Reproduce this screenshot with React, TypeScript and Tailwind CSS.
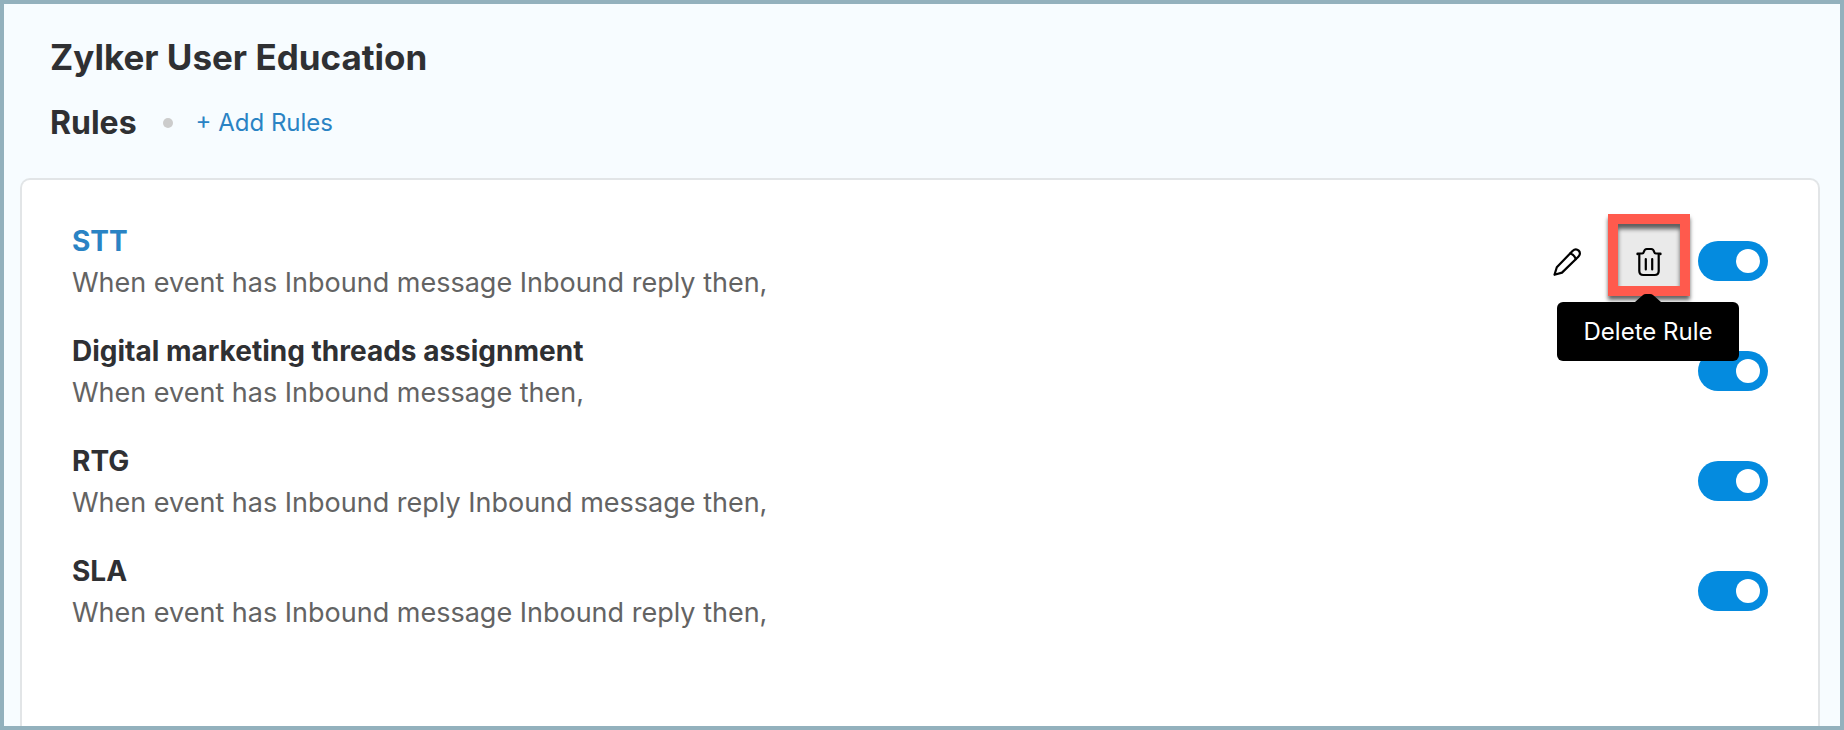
import { useState } from 'react';

interface Rule {
  id: number;
  name: string;
  summary: string;
}

const RULES: Rule[] = [
  { id: 1, name: 'STT', summary: 'When event has Inbound message Inbound reply then,' },
  { id: 2, name: 'Digital marketing threads assignment', summary: 'When event has Inbound message then,' },
  { id: 3, name: 'RTG', summary: 'When event has Inbound reply Inbound message then,' },
  { id: 4, name: 'SLA', summary: 'When event has Inbound message Inbound reply then,' },
];

function PencilIcon() {
  return (
    <svg width="30" height="30" viewBox="0 0 30 30" fill="none" stroke="#000" strokeWidth="2.2" strokeLinejoin="round" strokeLinecap="round" aria-hidden="true">
      <path d="M2.500 27.800 4.800 20.300 20.500 4C22.500 2 25 2 26.700 3.600S28.300 7.800 26.300 9.800L10 25.600Z" />
      <path d="M18.300 6.500q4 1.200 5.500 5.700" />
    </svg>
  );
}

function TrashIcon() {
  return (
    <svg width="28" height="30" viewBox="0 0 28 30" fill="none" stroke="#000" strokeWidth="2.2" strokeLinejoin="round" strokeLinecap="round" aria-hidden="true">
      <path d="M2.500 7.200V6.500h4.700c.9 0 1.300-.4 1.600-1.500C9.300 3 10 2 11.800 2h4.400c1.800 0 2.500 1 3 3 .3 1.100.7 1.500 1.600 1.500h4.700v.7" />
      <path d="M4.300 7v17c0 2.600 1.400 4 4 4h11.400c2.600 0 4-1.400 4-4V7" />
      <path d="M10.800 12v10.500M17.200 12v10.500" />
    </svg>
  );
}

function Toggle({ id, label }: { id: string; label: string }) {
  const [enabled, setEnabled] = useState(true);

  return (
    <input
      id={id}
      type="checkbox"
      role="switch"
      aria-label={label}
      checked={enabled}
      onChange={(e) => setEnabled(e.target.checked)}
      className="flex h-10 w-[70px] shrink-0 cursor-pointer appearance-none items-center rounded-full bg-gray-400 px-2 before:block before:size-6 before:rounded-full before:bg-white before:content-[''] checked:justify-end checked:bg-[#048bdf]"
    />
  );
}

function RuleActions() {
  return (
    <div className="mr-[18px] flex shrink-0 items-center gap-5 pb-[2px]">
      <button type="button" aria-label="Edit Rule" className="flex h-[72px] w-[62px] items-center justify-center pt-1">
        <PencilIcon />
      </button>
      <div className="relative">
        <button type="button" aria-label="Delete Rule" aria-describedby="delete-tip" className="flex h-[72px] w-[62px] items-center justify-center bg-[#eaeaea] pt-1">
          <TrashIcon />
        </button>
        <div className="pointer-events-none absolute -inset-x-[10px] -top-[10px] bottom-0 border-10 border-[#ff5a4d] shadow-[0_4px_4px_rgba(0,0,0,0.6),inset_0_5px_4px_rgba(0,0,0,0.6)]" />
        <div id="delete-tip" role="tooltip" className="absolute top-[70px] left-[30px] z-10 flex -translate-x-1/2 flex-col items-center">
          <svg width="26" height="8" viewBox="0 0 26 8" fill="#000" aria-hidden="true">
            <path d="M0 8 8 1Q9 0 11 0h4q2 0 3 1l8 7Z" />
          </svg>
          <span className="flex h-[59px] w-[182px] items-center justify-center rounded-md bg-black text-2xl whitespace-nowrap text-white">
            Delete Rule
          </span>
        </div>
      </div>
    </div>
  );
}

export default function App() {
  return (
    <div className="flex min-h-screen flex-col border-4 border-[#93b1bd] bg-[#f7fcff] font-['Inter','Liberation_Sans',sans-serif] text-[#2f3033]">
      <header className="px-[46px] pt-[29px] pb-[35px]">
        <h1 className="text-[35px] leading-12 font-bold">Zylker User Education</h1>
        <div className="mt-[22px] flex h-10 items-center">
          <h2 className="text-[32px] leading-10 font-bold">Rules</h2>
          <span className="mr-[23px] ml-[26px] size-[10px] rounded-full bg-[#cccccc]" />
          <a href="#add-rules" className="text-2xl leading-10 text-[#2a83c4]">+ Add Rules</a>
        </div>
      </header>

      <main className="mr-5 ml-4 flex-1 rounded-t-[10px] border-2 border-b-0 border-[#e2e5e7] bg-white px-[50px] pt-[38px]">
        <ul className="flex flex-col gap-6">
          {RULES.map((rule, i) => (
            <li key={rule.id} className="flex items-center">
              <div className="min-w-0 flex-1 pt-[2px] leading-[42px]">
                <h3 className={i === 0 ? 'text-[28px] font-bold text-[#2a83c4]' : 'text-[28px] font-bold'}>{rule.name}</h3>
                <p className="text-[27px] text-[#636363]">{rule.summary}</p>
              </div>
              {i === 0 && <RuleActions />}
              <Toggle id={`rule-${rule.id}`} label={`Enable ${rule.name}`} />
            </li>
          ))}
        </ul>
      </main>
    </div>
  );
}
